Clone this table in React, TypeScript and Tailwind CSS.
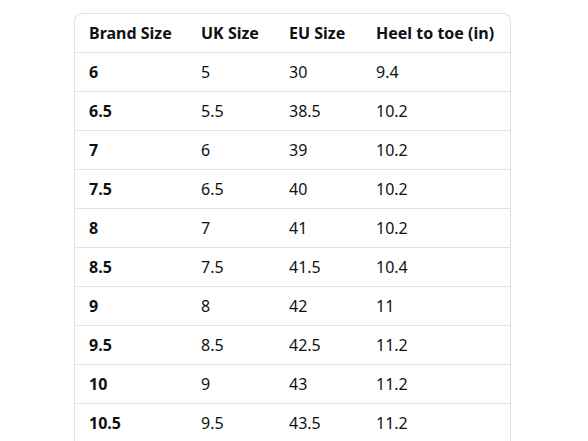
import React from "react";

const rows = [
  ["6", "5", "30", "9.4"],
  ["6.5", "5.5", "38.5", "10.2"],
  ["7", "6", "39", "10.2"],
  ["7.5", "6.5", "40", "10.2"],
  ["8", "7", "41", "10.2"],
  ["8.5", "7.5", "41.5", "10.4"],
  ["9", "8", "42", "11"],
  ["9.5", "8.5", "42.5", "11.2"],
  ["10", "9", "43", "11.2"],
  ["10.5", "9.5", "43.5", "11.2"],
];

const widths = ["w-[112px]", "w-[88px]", "w-[87px]", "w-[148px]"];

export default function App() {
  return (
    <div className="w-[588px] h-[441px] overflow-hidden bg-white pt-[13px] pl-[74px]" style={{ fontFamily: '"Noto Sans", "Open Sans", sans-serif' }}>
      <div className="w-[437px] rounded-t-[8px] border border-[#e3e3e3] border-b-0 text-[#0f1111] text-[16px] leading-none">
        <div className="flex h-[39px] items-center border-b border-[#e3e3e3]">
          {["Brand Size", "UK Size", "EU Size", "Heel to toe (in)"].map((h, i) => (
            <div key={h} className={`${widths[i]} pl-[14px] font-bold`}>{h}</div>
          ))}
        </div>
        {rows.map((r, ri) => (
          <div key={ri} className="flex h-[39px] items-center border-b border-[#e3e3e3]">
            {r.map((c, i) => (
              <div key={i} className={`${widths[i]} pl-[14px] ${i === 0 ? "font-bold" : ""}`}>{c}</div>
            ))}
          </div>
        ))}
      </div>
    </div>
  );
}
